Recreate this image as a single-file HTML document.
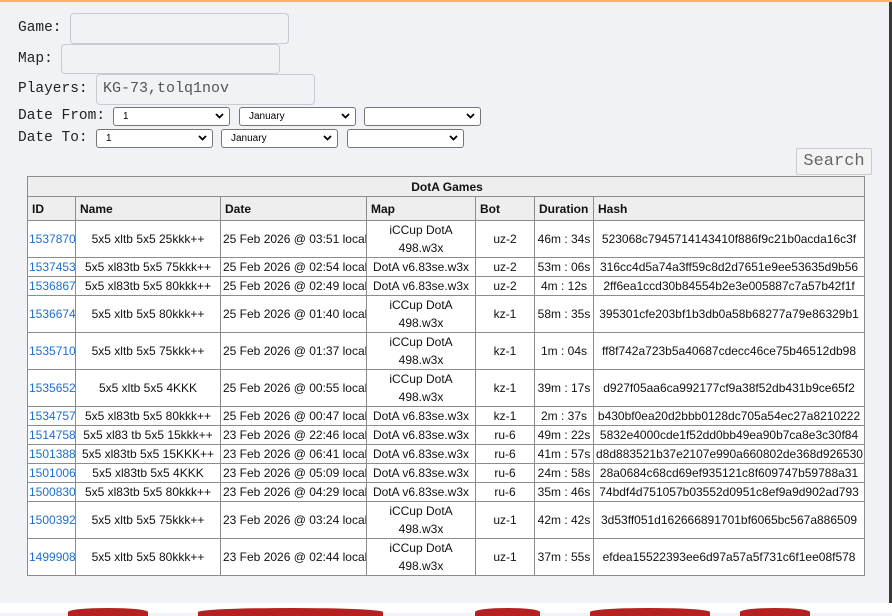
<!DOCTYPE html>
<html><head><meta charset="utf-8"><style>
html,body{margin:0;padding:0}
body{width:892px;height:613px;background:#f1f2f6;position:relative;overflow:hidden;font-family:"Liberation Sans",Arial,sans-serif}
.top{position:absolute;left:0;top:0;width:892px;height:2px;background:#f9b85a}
.edge{position:absolute;left:889px;top:2px;width:3px;height:601px;background:#3a3a3a}
.lbl{position:absolute;font-family:"Liberation Mono",monospace;font-size:14.5px;color:#222}
.inp{position:absolute;box-sizing:border-box;border:1px solid #c9cbd0;border-radius:4px;background:#f1f2f6;font-family:"Liberation Mono",monospace;font-size:15px;color:#555;padding-left:6px;line-height:28px}
.sel{position:absolute;box-sizing:border-box;height:19px;border:1px solid #767676;border-radius:3px;background:#fff;font-size:10px;color:#000;padding-left:9px;line-height:17px}
.sel svg{position:absolute;right:5px;top:5px}
.btn{position:absolute;left:796px;top:148px;width:76px;height:27px;box-sizing:border-box;border:1px solid #ccc;border-radius:2px;background:#f3f3f3;font-family:"Liberation Mono",monospace;font-size:17px;color:#666;text-align:center;line-height:25px}
table{position:absolute;left:27px;top:176px;border-collapse:collapse;table-layout:fixed;width:837px;font-size:12px;color:#111}
td,th{border:1px solid #8c8c8c;padding:0 2px;white-space:nowrap;overflow:hidden}
th{background:#eeeeee;text-align:left;font-weight:bold;height:23px;padding-left:4px}
th.t{text-align:center;height:19px}
td{background:#fff;text-align:center;line-height:18px}
td.id{text-align:left;color:#1b6fd0;padding:0 1px}
tr.s td{height:18px;line-height:18px}
tr.l td{height:36px;line-height:18px}
.bot{position:absolute;left:0;top:603px;width:892px;height:10px;background:#fff}
.blob{position:absolute;top:608px;height:8px;background:#b52020;border-radius:50% 50% 0 0}
</style></head><body>
<div class="top"></div>
<div class="lbl" style="left:18px;top:20px">Game:</div>
<div class="inp" style="left:70px;top:13px;width:219px;height:31px"></div>
<div class="lbl" style="left:18px;top:51px">Map:</div>
<div class="inp" style="left:61px;top:44px;width:219px;height:30px"></div>
<div class="lbl" style="left:18px;top:81px">Players:</div>
<div class="inp" style="left:96px;top:74px;width:219px;height:31px">KG-73,tolq1nov</div>
<div class="lbl" style="left:18px;top:108px">Date From:</div>
<div class="lbl" style="left:18px;top:130px">Date To:</div>
<div class="sel" style="left:113px;top:107px;width:117px">1<svg width="9" height="6"><path d="M1 1l3.5 3.5L8 1" stroke="#000" stroke-width="1.8" fill="none"/></svg></div>
<div class="sel" style="left:239px;top:107px;width:117px">January<svg width="9" height="6"><path d="M1 1l3.5 3.5L8 1" stroke="#000" stroke-width="1.8" fill="none"/></svg></div>
<div class="sel" style="left:364px;top:107px;width:117px"><svg width="9" height="6"><path d="M1 1l3.5 3.5L8 1" stroke="#000" stroke-width="1.8" fill="none"/></svg></div>
<div class="sel" style="left:96px;top:129px;width:117px">1<svg width="9" height="6"><path d="M1 1l3.5 3.5L8 1" stroke="#000" stroke-width="1.8" fill="none"/></svg></div>
<div class="sel" style="left:221px;top:129px;width:117px">January<svg width="9" height="6"><path d="M1 1l3.5 3.5L8 1" stroke="#000" stroke-width="1.8" fill="none"/></svg></div>
<div class="sel" style="left:347px;top:129px;width:117px"><svg width="9" height="6"><path d="M1 1l3.5 3.5L8 1" stroke="#000" stroke-width="1.8" fill="none"/></svg></div>
<div class="btn">Search</div>
<table>
<colgroup><col style="width:48px"><col style="width:145px"><col style="width:146px"><col style="width:109px"><col style="width:59px"><col style="width:59px"><col style="width:271px"></colgroup>
<tr><th class="t" colspan="7">DotA Games</th></tr>
<tr><th>ID</th><th>Name</th><th>Date</th><th>Map</th><th>Bot</th><th>Duration</th><th>Hash</th></tr>
<tr class="l"><td class="id">1537870</td><td>5x5 xltb 5x5 25kkk++</td><td>25 Feb 2026 @ 03:51 local</td><td>iCCup DotA<br>498.w3x</td><td>uz-2</td><td>46m : 34s</td><td>523068c7945714143410f886f9c21b0acda16c3f</td></tr>
<tr class="s"><td class="id">1537453</td><td>5x5 xl83tb 5x5 75kkk++</td><td>25 Feb 2026 @ 02:54 local</td><td>DotA v6.83se.w3x</td><td>uz-2</td><td>53m : 06s</td><td>316cc4d5a74a3ff59c8d2d7651e9ee53635d9b56</td></tr>
<tr class="s"><td class="id">1536867</td><td>5x5 xl83tb 5x5 80kkk++</td><td>25 Feb 2026 @ 02:49 local</td><td>DotA v6.83se.w3x</td><td>uz-2</td><td>4m : 12s</td><td>2ff6ea1ccd30b84554b2e3e005887c7a57b42f1f</td></tr>
<tr class="l"><td class="id">1536674</td><td>5x5 xltb 5x5 80kkk++</td><td>25 Feb 2026 @ 01:40 local</td><td>iCCup DotA<br>498.w3x</td><td>kz-1</td><td>58m : 35s</td><td>395301cfe203bf1b3db0a58b68277a79e86329b1</td></tr>
<tr class="l"><td class="id">1535710</td><td>5x5 xltb 5x5 75kkk++</td><td>25 Feb 2026 @ 01:37 local</td><td>iCCup DotA<br>498.w3x</td><td>kz-1</td><td>1m : 04s</td><td>ff8f742a723b5a40687cdecc46ce75b46512db98</td></tr>
<tr class="l"><td class="id">1535652</td><td>5x5 xltb 5x5 4KKK</td><td>25 Feb 2026 @ 00:55 local</td><td>iCCup DotA<br>498.w3x</td><td>kz-1</td><td>39m : 17s</td><td>d927f05aa6ca992177cf9a38f52db431b9ce65f2</td></tr>
<tr class="s"><td class="id">1534757</td><td>5x5 xl83tb 5x5 80kkk++</td><td>25 Feb 2026 @ 00:47 local</td><td>DotA v6.83se.w3x</td><td>kz-1</td><td>2m : 37s</td><td>b430bf0ea20d2bbb0128dc705a54ec27a8210222</td></tr>
<tr class="s"><td class="id">1514758</td><td>5x5 xl83 tb 5x5 15kkk++</td><td>23 Feb 2026 @ 22:46 local</td><td>DotA v6.83se.w3x</td><td>ru-6</td><td>49m : 22s</td><td>5832e4000cde1f52dd0bb49ea90b7ca8e3c30f84</td></tr>
<tr class="s"><td class="id">1501388</td><td>5x5 xl83tb 5x5 15KKK++</td><td>23 Feb 2026 @ 06:41 local</td><td>DotA v6.83se.w3x</td><td>ru-6</td><td>41m : 57s</td><td>d8d883521b37e2107e990a660802de368d926530</td></tr>
<tr class="s"><td class="id">1501006</td><td>5x5 xl83tb 5x5 4KKK</td><td>23 Feb 2026 @ 05:09 local</td><td>DotA v6.83se.w3x</td><td>ru-6</td><td>24m : 58s</td><td>28a0684c68cd69ef935121c8f609747b59788a31</td></tr>
<tr class="s"><td class="id">1500830</td><td>5x5 xl83tb 5x5 80kkk++</td><td>23 Feb 2026 @ 04:29 local</td><td>DotA v6.83se.w3x</td><td>ru-6</td><td>35m : 46s</td><td>74bdf4d751057b03552d0951c8ef9a9d902ad793</td></tr>
<tr class="l"><td class="id">1500392</td><td>5x5 xltb 5x5 75kkk++</td><td>23 Feb 2026 @ 03:24 local</td><td>iCCup DotA<br>498.w3x</td><td>uz-1</td><td>42m : 42s</td><td>3d53ff051d162666891701bf6065bc567a886509</td></tr>
<tr class="l"><td class="id">1499908</td><td>5x5 xltb 5x5 80kkk++</td><td>23 Feb 2026 @ 02:44 local</td><td>iCCup DotA<br>498.w3x</td><td>uz-1</td><td>37m : 55s</td><td>efdea15522393ee6d97a57a5f731c6f1ee08f578</td></tr>
</table>
<div class="edge"></div>
<div class="bot"></div>
<div class="blob" style="left:68px;width:80px"></div>
<div class="blob" style="left:198px;width:185px"></div>
<div class="blob" style="left:475px;width:65px"></div>
<div class="blob" style="left:590px;width:120px"></div>
<div class="blob" style="left:740px;width:70px"></div>
</body></html>
